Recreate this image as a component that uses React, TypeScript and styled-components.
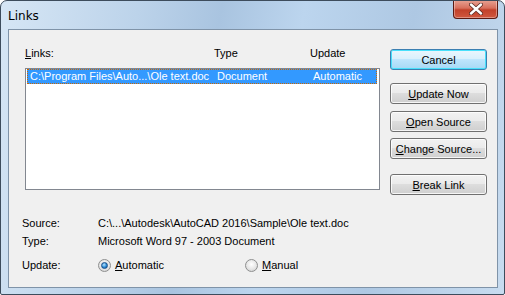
import styled, { createGlobalStyle } from "styled-components";

const GlobalStyle = createGlobalStyle`
  html, body {
    margin: 0;
    padding: 0;
    background: #ffffff;
  }
  body {
    font-family: "Liberation Sans", Arial, sans-serif;
    font-size: 11px;
    color: #000;
  }
`;

const Window = styled.div`
  width: 505px;
  height: 295px;
  box-sizing: border-box;
  border: 1px solid #3d4c5c;
  border-radius: 7px 7px 2px 2px;
  background: linear-gradient(
    100deg,
    #d6e6f5 0%,
    #bcd3ea 25%,
    #a9c4e0 40%,
    #bcd5ee 55%,
    #aec8e3 75%,
    #c8dcf0 100%
  );
  display: flex;
  flex-direction: column;
  overflow: hidden;
`;

const TitleBar = styled.div`
  height: 28px;
  display: flex;
  align-items: flex-start;
  justify-content: space-between;
  padding-left: 7px;
  padding-right: 6px;
`;

const Title = styled.span`
  font-family: "DejaVu Sans", "Noto Sans", sans-serif;
  font-size: 12px;
  line-height: 14px;
  margin-top: 8px;
  color: #000;
`;

const CloseButton = styled.div`
  width: 45px;
  height: 19px;
  margin-top: -1px;
  box-sizing: border-box;
  border: 1px solid #5b1a12;
  border-top: none;
  border-radius: 0 0 4px 4px;
  background: linear-gradient(#e8a495 0%, #d86f5c 45%, #c2412a 55%, #d0583f 100%);
  box-shadow: inset 0 0 0 1px rgba(255, 255, 255, 0.35);
  display: flex;
  align-items: center;
  justify-content: center;
`;

const Client = styled.div`
  flex: 1;
  margin: 0 6px 6px 7px;
  border: 1px solid #7f93a8;
  background: #f0f0f0;
  display: flex;
  flex-direction: column;
  padding: 17px 10px 0 16px;
`;

const Main = styled.div`
  display: flex;
  gap: 10px;
`;

const ListColumn = styled.div`
  width: 355px;
  display: flex;
  flex-direction: column;
`;

const HeaderRow = styled.div`
  display: flex;
  height: 13px;
  line-height: 13px;
  margin-bottom: 8px;
`;

const Col = styled.span<{ $w: number }>`
  width: ${(p) => p.$w}px;
  flex: none;
  white-space: nowrap;
`;

const ListBox = styled.div`
  height: 122px;
  box-sizing: border-box;
  border: 1px solid #828790;
  background: #ffffff;
  padding: 0 1px;
`;

const ListRow = styled.div<{ $selected?: boolean }>`
  display: flex;
  height: 15px;
  line-height: 13px;
  box-sizing: border-box;
  padding-left: 2px;
  margin-right: 1px;
  background: ${(p) => (p.$selected ? "#3399ff" : "transparent")};
  color: ${(p) => (p.$selected ? "#ffffff" : "#000")};
  border: 1px dotted ${(p) => (p.$selected ? "#cc6600" : "transparent")};
`;

const ButtonColumn = styled.div`
  display: flex;
  flex-direction: column;
  padding-top: 2px;
  width: 97px;
`;

const Button = styled.div<{ $default?: boolean; $gap?: number }>`
  height: 21px;
  box-sizing: border-box;
  margin-top: ${(p) => p.$gap ?? 0}px;
  border: 1px solid ${(p) => (p.$default ? "#3c7fb1" : "#707070")};
  border-radius: 3px;
  background: ${(p) =>
    p.$default
      ? "linear-gradient(#eaf6fd 0%, #d9f0fc 45%, #bee6fd 50%, #a7d9f5 100%)"
      : "linear-gradient(#f2f2f2 0%, #ebebeb 45%, #dddddd 50%, #cfcfcf 100%)"};
  box-shadow: inset 0 0 0 1px
    ${(p) => (p.$default ? "#48e0fb" : "rgba(255,255,255,0.8)")};
  display: flex;
  align-items: center;
  justify-content: center;
  white-space: nowrap;
`;

const U = styled.span`
  text-decoration: underline;
`;

const Info = styled.div`
  margin-top: 19px;
  margin-left: -3px;
  display: flex;
  flex-direction: column;
`;

const InfoRow = styled.div<{ $h: number }>`
  display: flex;
  align-items: center;
  height: ${(p) => p.$h}px;
`;

const Label = styled.span`
  width: 76px;
  flex: none;
`;

const RadioOption = styled.label<{ $w?: number }>`
  display: flex;
  align-items: center;
  gap: 4px;
  width: ${(p) => (p.$w ? `${p.$w}px` : "auto")};
`;

const RadioCircle = styled.span<{ $checked?: boolean }>`
  width: 13px;
  height: 13px;
  box-sizing: border-box;
  border-radius: 50%;
  border: 1px solid #8e8f8f;
  background: radial-gradient(circle at 50% 40%, #ffffff 0%, #e6e6e6 55%, #c9c9c9 100%);
  display: flex;
  align-items: center;
  justify-content: center;
  flex: none;
  &::after {
    content: "";
    display: ${(p) => (p.$checked ? "block" : "none")};
    width: 5px;
    height: 5px;
    border-radius: 50%;
    border: 1px solid #1a4f8a;
    background: radial-gradient(circle at 40% 35%, #b9e4ff 0%, #2a8ad4 55%, #0f4f94 100%);
  }
`;

function CloseGlyph() {
  return (
    <svg width="14" height="12" viewBox="0 0 14 12">
      <path
        d="M2 1.5 L12 10.5 M12 1.5 L2 10.5"
        stroke="#5a2a22"
        strokeWidth="4"
        strokeLinecap="round"
      />
      <path
        d="M2 1.5 L12 10.5 M12 1.5 L2 10.5"
        stroke="#ffffff"
        strokeWidth="2.4"
        strokeLinecap="round"
      />
    </svg>
  );
}

export default function App() {
  return (
    <>
      <GlobalStyle />
      <Window>
        <TitleBar>
          <Title>Links</Title>
          <CloseButton>
            <CloseGlyph />
          </CloseButton>
        </TitleBar>
        <Client>
          <Main>
            <ListColumn>
              <HeaderRow>
                <Col $w={189}>
                  <U>L</U>inks:
                </Col>
                <Col $w={96}>Type</Col>
                <Col $w={60}>Update</Col>
              </HeaderRow>
              <ListBox>
                <ListRow $selected>
                  <Col $w={187}>C:\Program Files\Auto...\Ole text.doc</Col>
                  <Col $w={96}>Document</Col>
                  <Col $w={60}>Automatic</Col>
                </ListRow>
              </ListBox>
            </ListColumn>
            <ButtonColumn>
              <Button $default>Cancel</Button>
              <Button $gap={13}>
                <span>
                  <U>U</U>pdate Now
                </span>
              </Button>
              <Button $gap={7}>
                <span>
                  <U>O</U>pen Source
                </span>
              </Button>
              <Button $gap={6}>
                <span>
                  <U>C</U>hange Source...
                </span>
              </Button>
              <Button $gap={15}>
                <span>
                  <U>B</U>reak Link
                </span>
              </Button>
            </ButtonColumn>
          </Main>
          <Info>
            <InfoRow $h={18}>
              <Label>Source:</Label>
              <span>C:\...\Autodesk\AutoCAD 2016\Sample\Ole text.doc</span>
            </InfoRow>
            <InfoRow $h={18}>
              <Label>Type:</Label>
              <span>Microsoft Word 97 - 2003 Document</span>
            </InfoRow>
            <InfoRow $h={30}>
              <Label>Update:</Label>
              <RadioOption $w={147}>
                <RadioCircle $checked />
                <span>
                  <U>A</U>utomatic
                </span>
              </RadioOption>
              <RadioOption>
                <RadioCircle />
                <span>
                  <U>M</U>anual
                </span>
              </RadioOption>
            </InfoRow>
          </Info>
        </Client>
      </Window>
    </>
  );
}
